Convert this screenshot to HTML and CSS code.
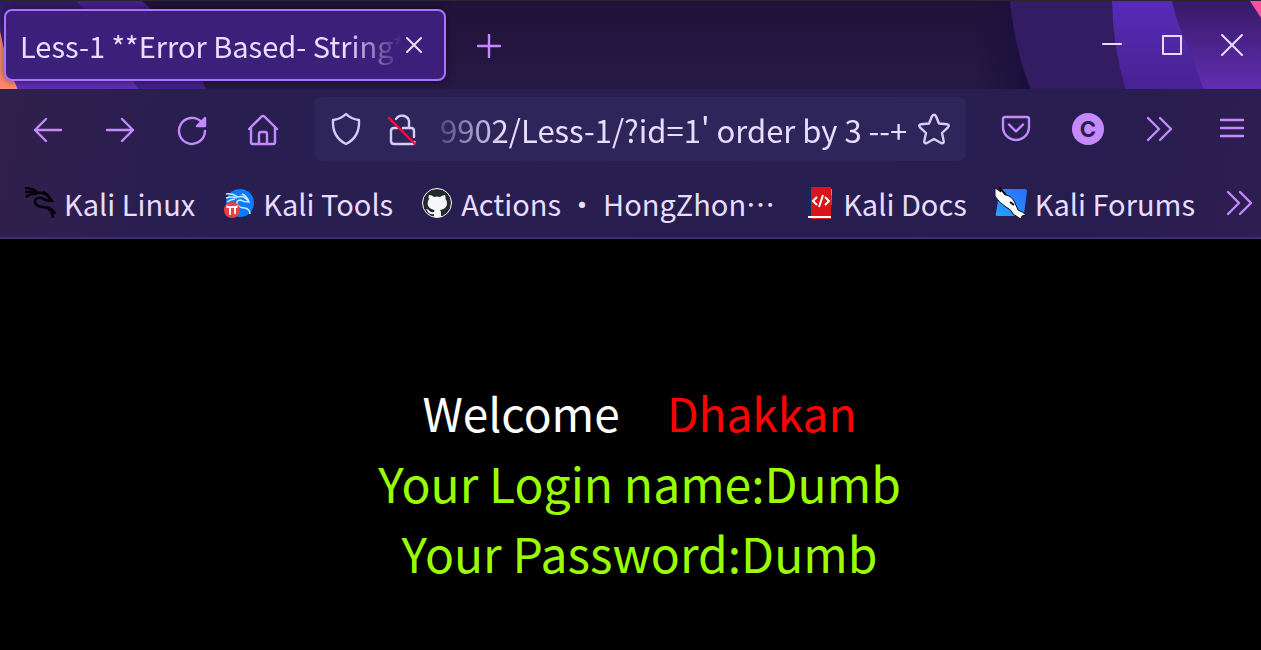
FILE: index.html
```html
<!DOCTYPE html>
<html lang="zh-CN">
<head>
<meta charset="UTF-8">
<meta name="viewport" content="width=device-width, initial-scale=1.0">
<title>Less-1 **Error Based- String**</title>
<link rel="stylesheet" href="styles.css">
</head>
<body>
    <header id="browser">
        <div id="tab-bar">
            <svg class="theme theme-left" width="280" height="89" viewBox="0 0 280 89" aria-hidden="true">
                <defs>
                    <linearGradient id="band" x1="0" y1="0" x2="0" y2="1">
                        <stop offset="0" stop-color="#2f1a63"/>
                        <stop offset="1" stop-color="#6230b8"/>
                    </linearGradient>
                </defs>
                <path d="M0 0H142Q190 40 206 89H0z" fill="#43218c"/>
                <path d="M0 0H77Q112 45 139 89H0z" fill="url(#band)"/>
                <path d="M0 30Q6 62 18 89H0z" fill="#ff8a70"/>
            </svg>
            <svg class="theme theme-right" width="291" height="89" viewBox="0 0 291 89" aria-hidden="true">
                <defs>
                    <linearGradient id="shade" x1="0" y1="0" x2="1" y2="0">
                        <stop offset="0" stop-color="#1a103c" stop-opacity="0"/>
                        <stop offset="1" stop-color="#190f3b"/>
                    </linearGradient>
                    <linearGradient id="blue" x1="0" y1="0" x2="0" y2="1">
                        <stop offset="0" stop-color="#572bb8"/>
                        <stop offset="1" stop-color="#472291"/>
                    </linearGradient>
                    <linearGradient id="violet" x1="0" y1="0" x2="0" y2="1">
                        <stop offset="0" stop-color="#361a66"/>
                        <stop offset="1" stop-color="#632db3"/>
                    </linearGradient>
                </defs>
                <path d="M0 0H50L62 89H10z" fill="url(#shade)"/>
                <path d="M40 0Q44 45 61 89H291V0z" fill="#341c63"/>
                <path d="M142 0Q143 48 156 89H291V0z" fill="url(#blue)"/>
                <path d="M202 0Q206 20 219 49L234 89H291V0z" fill="url(#violet)"/>
                <path d="M280 0H291V17z" fill="#ff4fa0"/>
            </svg>
            <div class="tab">
                <span class="tab-title">Less-1 **Error Based- String**</span>
                <button class="tab-close" aria-label="Close tab">
                    <svg width="16" height="16" viewBox="0 0 16 16"><path d="M1 1l14 14M15 1L1 15"/></svg>
                </button>
            </div>
            <button class="new-tab" aria-label="New tab">
                <svg width="24" height="24" viewBox="0 0 24 24"><path d="M12 1v22M1 12h22"/></svg>
            </button>
            <div class="window-buttons">
                <button aria-label="Minimize"><svg width="22" height="22" viewBox="0 0 22 22"><path d="M2 10h18"/></svg></button>
                <button aria-label="Maximize"><svg width="22" height="22" viewBox="0 0 22 22"><path d="M2 2h18v18H2z"/></svg></button>
                <button aria-label="Close"><svg width="22" height="22" viewBox="0 0 22 22"><path d="M1 1l20 20M21 1L1 21"/></svg></button>
            </div>
        </div>

        <nav id="nav-bar">
            <div class="nav-buttons">
                <button aria-label="Back"><svg width="32" height="32" viewBox="0 0 32 32"><path d="M29 16H3M14 5L3 16l11 11"/></svg></button>
                <button aria-label="Forward"><svg width="32" height="32" viewBox="0 0 32 32"><path d="M3 16h26M18 5l11 11-11 11"/></svg></button>
                <button aria-label="Reload"><svg width="32" height="32" viewBox="0 0 32 32"><path d="M29 17A13 13 0 1 1 25.500 8"/><path class="solid" d="M29 4v8h-8z"/></svg></button>
                <button aria-label="Home"><svg width="32" height="32" viewBox="0 0 32 32"><path d="M1 15L13.500 2.600q1.500-1.200 3 0L29 15M3 13v15q0 2 2 2h20q2 0 2-2V13M11 30V20q0-2 2-2h4q2 0 2 2v10"/></svg></button>
            </div>
            <div class="url-bar">
                <button aria-label="Tracking protection"><svg width="32" height="34" viewBox="0 0 32 34"><path d="M16 2Q21 7 29 8Q30 25 16 32Q2 25 3 8Q11 7 16 2z"/></svg></button>
                <button aria-label="Connection not secure">
                    <svg width="32" height="34" viewBox="0 0 32 34">
                        <path d="M10 7a7 6.500 0 0 1 13 2v7M11 16H8q-3 0-3 3v10q0 3 3 3h18q2 0 2.500-2M17 16h8q3 0 3 3v6"/>
                        <path class="strike" d="M3 6l26 26"/>
                    </svg>
                </button>
                <input class="url" type="text" aria-label="Address" value="9902/Less-1/?id=1' order by 3 --+">
                <button aria-label="Bookmark this page"><svg width="32" height="32" viewBox="0 0 32 32"><path d="M14 3.200q2-3 4 0l3 7.300 8 .8q3 .6 1 3l-6 5.700 1.700 8q.3 3-2.700 2L16 26l-7 4q-3 1-2.700-2L8 20l-6-5.700q-2-2.400 1-3l8-.8z"/></svg></button>
            </div>
            <div class="nav-tools">
                <button aria-label="Save to Pocket"><svg width="32" height="32" viewBox="0 0 32 32"><path d="M5 4h22q2 0 2 2v8a13 13 0 0 1-26 0V6q0-2 2-2zM9 11.500l7 7 7-7"/></svg></button>
                <button class="account" aria-label="Account">C</button>
                <button aria-label="More tools"><svg width="32" height="32" viewBox="0 0 32 32"><path d="M4 5l11 11L4 27M16 5l11 11-11 11"/></svg></button>
                <button aria-label="Menu"><svg width="32" height="32" viewBox="0 0 32 32"><path d="M5 7h22M5 15h22M5 23h22"/></svg></button>
            </div>
        </nav>

        <nav id="bookmarks">
            <a href="#">
                <svg width="32" height="32" viewBox="0 0 32 32" class="dragon">
                    <path d="M1 1Q9 1 13 5M1 5q6-1 12 1M2 10q4-4 11-3M19 5q5 2 8 9"/>
                    <path d="M13 6Q21 5 25 10L28 14Q22 14 18 11Q11 10 11 15Q12 20 20 20Q29 22 29 31M23 20q6 2 8 7"/>
                </svg>
                <span>Kali Linux</span>
            </a>
            <a href="#">
                <svg width="32" height="32" viewBox="0 0 32 32">
                    <circle cx="17" cy="16" r="14" fill="#087bff"/>
                    <path d="M3 7q6-1 12 3Q21 8 26 15q-6 0-8-2-5 0-4 4 2 4 8 4 5 1 5 6M3 11q6-2 11 0M4 15q4-3 8-3M19 7q5 2 7 8" fill="none" stroke="#cfe9ff" stroke-width="1.500"/>
                    <circle cx="9" cy="23" r="8" fill="#f23d40"/>
                    <path d="M4 20h10M7 20v8M12 20v7" stroke="#fff" stroke-width="2"/>
                    <path d="M4 18v3M14 18v3" stroke="#fff"/>
                </svg>
                <span>Kali Tools</span>
            </a>
            <a href="#">
                <svg width="32" height="32" viewBox="0 0 32 32">
                    <circle cx="16" cy="16" r="14.500" fill="#24292e" stroke="#fff"/>
                    <path d="M8 8q3 0 5 2 3-1 6 0 3-2 5-2 1 2 .5 4 2 2 1.500 5-.5 5-7 6 1 1 1 3v4h-7v-3q-5 1-6.500-3l-1.500-2q2-.5 3.500 2 2 2 4.500 1l.5-2q-6-1-7-6 0-3 1.500-5Q7 10 8 8z" fill="#f6f6f6"/>
                </svg>
                <span>Actions • HongZhon…</span>
            </a>
            <a href="#">
                <svg width="32" height="32" viewBox="0 0 32 32">
                    <path d="M4 0h4v31H4z" fill="#102a57"/>
                    <path d="M26 2h3v7h-3z" fill="#ff8a00"/>
                    <path d="M26 8h3v5h-3z" fill="#16a34a"/>
                    <path d="M26 13h3v5h-3z" fill="#2563eb"/>
                    <path d="M8 0h20v32H8z" fill="#d91519"/>
                    <path d="M5 29h23v2H5z" fill="#fff"/>
                    <path d="M14 10l-4 4 4 4M22 10l4 4-4 4M20 8l-4 12" fill="none" stroke="#fff" stroke-width="2"/>
                </svg>
                <span>Kali Docs</span>
            </a>
            <a href="#">
                <svg width="32" height="32" viewBox="0 0 32 32">
                    <defs>
                        <linearGradient id="forum" x1="0" y1="1" x2="1" y2="0">
                            <stop offset="0" stop-color="#22a5ff"/>
                            <stop offset="1" stop-color="#2a6cff"/>
                        </linearGradient>
                    </defs>
                    <path d="M5 2h25q2 0 2 2l-3 23q0 2-2 2H2q-2 0-1-3z" fill="url(#forum)"/>
                    <path d="M0 1l6 4-1-4 6 7q6 1 9 8l3 7q5 2 8 5l-4 1-1 3-8-5q-1-4-7-7Q3 15 0 9z" fill="#fff" stroke="#080b12"/>
                    <path d="M4 0l7 8M15 15l4 3" fill="none" stroke="#080b12" stroke-width="2"/>
                </svg>
                <span>Kali Forums</span>
            </a>
            <button aria-label="More bookmarks"><svg width="32" height="32" viewBox="0 0 32 32"><path d="M5 5l11 11L5 27M17 5l11 11-11 11"/></svg></button>
        </nav>
    </header>

    <main>
        <p class="welcome">Welcome&nbsp;&nbsp;&nbsp;&nbsp;<span>Dhakkan</span></p>
        <p class="login">Your Login name:Dumb<br>Your Password:Dumb</p>
    </main>
</body>
</html>
```
FILE: styles.css
```css
* {
    box-sizing: border-box;
}
body {
    margin: 0;
    background-color: #000;
    color: #e8dcff;
    font-family: "Noto Sans CJK SC", sans-serif;
    font-size: 29px;
}
button {
    display: flex;
    align-items: center;
    justify-content: center;
    flex: none;
    padding: 0;
    border: none;
    background: none;
    color: #c58aff;
}
button svg {
    display: block;
    fill: none;
    stroke: currentColor;
    stroke-width: 2;
    stroke-linecap: round;
    stroke-linejoin: round;
}
#browser {
    background: linear-gradient(100deg, #33204c 0, #291e50 180px, #281d4f 88%, #2e1d50 100%);
    border-bottom: 2px solid #3b2d70;
}

/* tabs */
#tab-bar {
    position: relative;
    display: flex;
    align-items: center;
    height: 89px;
    padding: 0 18px 1px 4px;
    border-top: 1px solid #29272e;
    background: linear-gradient(#21123a, #261945);
    overflow: hidden;
}
.theme {
    position: absolute;
    top: 0;
}
.theme-left {
    left: 0;
}
.theme-right {
    right: 0;
}
.tab {
    position: relative;
    display: flex;
    align-items: center;
    width: 442px;
    height: 72px;
    padding: 0 22px 0 14px;
    border: 2px solid #ab71ff;
    border-radius: 8px;
    background-color: #3c1f7b;
    box-shadow: 0 0 8px rgba(0, 0, 0, 0.5);
}
.tab-title {
    flex: 1;
    overflow: hidden;
    white-space: nowrap;
    -webkit-mask-image: linear-gradient(to left, transparent, #000 56px);
    mask-image: linear-gradient(to left, transparent, #000 56px);
}
.tab-close {
    margin-left: 4px;
    color: #e8dcff;
}
.new-tab {
    position: relative;
    margin-left: 31px;
    padding-top: 2px;
}
.window-buttons {
    position: relative;
    display: flex;
    gap: 38px;
    margin-left: auto;
}
.window-buttons button {
    color: #e8dcff;
}

/* navigation */
#nav-bar {
    display: flex;
    align-items: center;
    height: 80px;
    padding: 0 13px 0 32px;
}
#nav-bar svg,
#bookmarks > button svg,
.new-tab svg {
    stroke-width: 2.4;
}
.nav-buttons,
.nav-tools {
    display: flex;
    gap: 40px;
}
.nav-buttons {
    padding-top: 2px;
}
.solid {
    fill: currentColor;
}
.url-bar {
    display: flex;
    align-items: center;
    flex: 1;
    height: 64px;
    margin: 0 34px;
    padding: 0 16px;
    border-radius: 8px;
    background-color: #2e255b;
}
.url-bar button {
    color: #d8ccf4;
}
.url-bar button + button {
    margin-left: 24px;
}
.url-bar .strike {
    stroke: #f5103f;
}
.url {
    flex: 1;
    min-width: 0;
    margin: 0 10px 0 22px;
    padding: 0;
    border: none;
    outline: none;
    background: none;
    color: inherit;
    font: inherit;
    font-size: 31px;
    -webkit-mask-image: linear-gradient(to right, rgba(0, 0, 0, 0.2), #000 64px);
    mask-image: linear-gradient(to right, rgba(0, 0, 0, 0.2), #000 64px);
}
.account {
    width: 32px;
    height: 32px;
    border-radius: 50%;
    background-color: #c58aff;
    color: #281d4f;
    font: bold 22px/32px Inter, sans-serif;
}

/* bookmarks */
#bookmarks {
    display: flex;
    align-items: center;
    gap: 28px;
    height: 68px;
    padding: 0 6px 0 24px;
    white-space: nowrap;
}
#bookmarks a {
    display: flex;
    align-items: center;
    gap: 8px;
    color: inherit;
    text-decoration: none;
}
#bookmarks > button {
    margin-left: auto;
}
.dragon {
    fill: none;
    stroke: #050309;
    stroke-width: 2.5;
}

/* page */
main {
    padding: 138px 0 0 18px;
    text-align: center;
}
main p {
    margin: 0;
    line-height: 70px;
}
.welcome {
    color: #fff;
    font-size: 46px;
}
.welcome span {
    margin-left: 6px;
    color: #f00;
}
.login {
    color: #9f0;
    font-size: 48px;
}
```
